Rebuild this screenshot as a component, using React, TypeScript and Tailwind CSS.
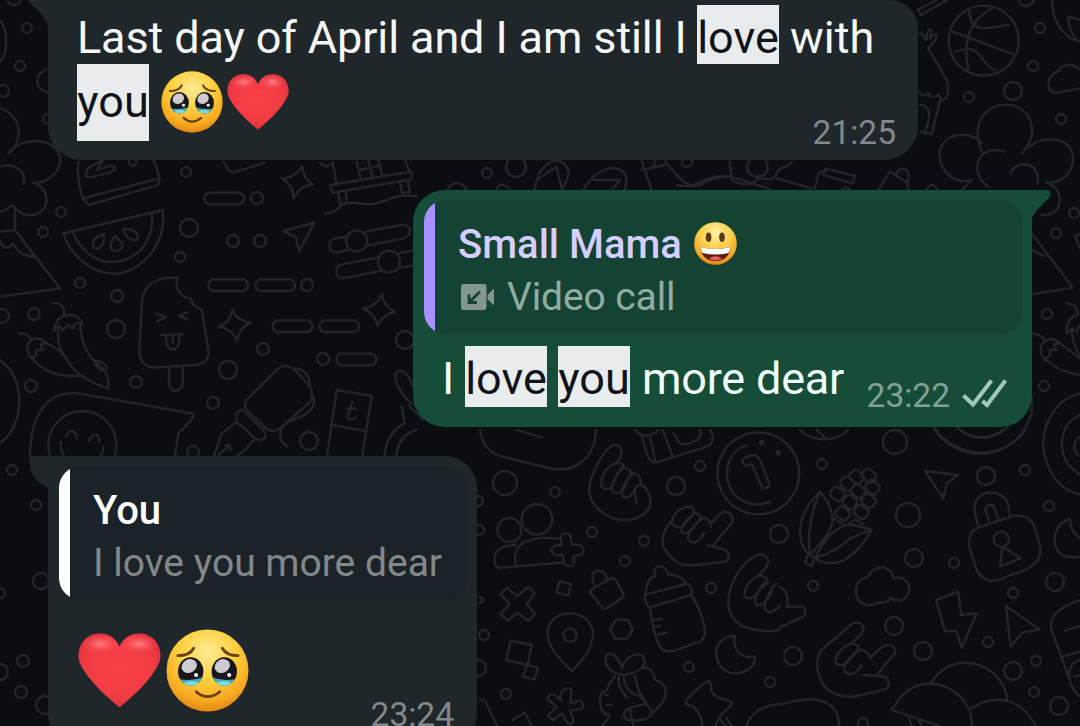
import React from "react";

type Dot = [number, number, number];

const dots: Dot[] = [
  [27, 28, 5], [20, 66, 5], [3, 91, 6], [14, -2, 7], [48, 119, 5],
  [186, 172, 5], [61, 212, 5], [43, 232, 5], [80, 283, 5], [257, 198, 6], [189, 228, 9],
  [233, 241, 6], [260, 241, 6], [180, 257, 5], [307, 285, 6], [117, 296, 6], [34, 314, 6], [2, 316, 7],
  [116, 329, 9], [263, 349, 6], [228, 370, 9], [323, 359, 6], [136, 382, 6], [31, 386, 6],
  [213, 403, 6], [309, 441, 9], [193, 452, 6], [405, 340, 9], [12, 470, 5], [36, 505, 5],
  [41, 581, 8], [0, 593, 5], [23, 661, 6], [0, 672, 8], [21, 692, 6], [45, 705, 9],
  [487, 173, 5], [516, 167, 10], [457, 193, 10], [687, 162, 5],
  [969, 97, 5], [1033, 66, 5], [1040, 28, 5], [1013, 91, 9], [1026, -2, 8], [1061, 119, 5],
  [1074, 213, 5], [1056, 233, 5], [1047, 314, 5], [1044, 386, 5], [932, 190, 5],
  [505, 483, 12], [555, 492, 5], [478, 501, 5], [479, 530, 5], [484, 635, 5], [478, 668, 8], [506, 694, 5],
  [592, 532, 5], [644, 541, 5], [625, 561, 5], [700, 466, 5], [676, 486, 9], [711, 588, 5], [689, 667, 5],
  [770, 682, 5], [822, 464, 5], [779, 534, 9], [895, 442, 12], [986, 476, 9], [1025, 470, 5], [1049, 506, 5],
  [908, 515, 12], [914, 558, 9], [954, 563, 5], [1013, 593, 5], [1055, 582, 9], [894, 626, 9],
  [813, 586, 5], [793, 656, 9], [923, 651, 9], [988, 642, 5], [1036, 661, 5], [1013, 671, 9],
  [1034, 692, 5], [1059, 706, 9], [863, 723, 5],
];

const kernels = [
  [230, 140], [266, 137], [202, 161], [172, 192], [234, 183],
  [278, 172], [210, 216], [266, 212], [188, 250], [244, 246],
];

function Corn() {
  return (
    <g>
      {kernels.map(([x, y], i) => (
        <rect key={i} x={x - 20} y={y - 17} width="40" height="34" rx="11" transform={`rotate(38 ${x} ${y})`} />
      ))}
      <path d="M75 398L84 374L104 384L96 409ZM90 374C80 310 95 250 118 186M118 186C85 220 65 250 60 300C60 340 72 362 90 374C110 350 155 310 158 270C155 235 140 205 118 186M105 384C130 330 170 280 220 285L275 298C255 340 220 375 190 392C160 405 125 400 105 384C150 372 190 345 210 325L275 298M160 265L190 283M205 282L225 268L250 282" />
    </g>
  );
}

function Wallpaper() {
  return (
    <svg
      className="pointer-events-none absolute inset-0"
      width="1080"
      height="726"
      viewBox="0 0 1080 726"
      fill="none"
      stroke="#22262a"
      strokeWidth="2.3"
      strokeLinecap="round"
      strokeLinejoin="round"
    >
      {dots.map(([x, y, r], i) => (
        <circle key={i} cx={x} cy={y} r={r} />
      ))}

      {/* upper left */}
      <g transform="scale(.33333)" strokeWidth="7">
        <path d="M0 60C25 95 25 160 0 185M145 207C105 215 95 265 145 278M0 325C70 345 70 430 25 460C70 400 190 415 180 490C170 530 135 550 98 548C155 560 155 650 85 645C60 645 50 625 35 615C25 625 10 635 0 635M0 500C50 485 80 520 70 552" />
      </g>
      <g transform="translate(0 150) scale(.33333)" strokeWidth="7">
        <path d="M45 175V240L180 415L0 440M0 245L45 240L105 320C75 320 50 305 38 280C25 305 5 290 0 272" />
        <path d="M235 35C230 80 240 120 248 145L478 85C475 60 465 45 460 30M248 145L265 165L475 105L480 85M260 70C250 80 265 85 290 78L335 65C350 60 345 45 330 48L290 60L310 30L270 50Q255 60 260 70" />
        <circle cx="398" cy="36" r="11" />
        <path d="M190 250L488 180C500 260 450 350 360 370C280 378 215 320 190 250ZM218 245C240 300 290 345 350 335C420 325 465 265 455 190" />
        <path d="M312 253C285 260 275 275 280 292C295 305 315 285 312 253ZM345 258C330 275 328 295 340 302C360 305 370 290 367 280ZM371 237C375 262 395 275 412 268C420 250 400 235 371 237Z" />
        <path d="M534 383C470 380 425 400 425 470L418 600C418 640 440 655 475 652L585 645C615 640 628 630 625 600L605 478Q575 470 573 445C540 445 520 410 534 383ZM507 655V700C507 730 548 730 548 700V650M467 489L498 502L472 514M564 486L537 497L563 508M485 555L548 553M498 558C498 585 505 600 520 598C535 597 540 575 538 556M518 560V580" />
        <path d="M160 460C185 455 198 475 190 498C170 505 165 525 160 543L178 528L188 540L205 525L218 535L228 518L248 522C240 500 220 490 192 498M175 540C170 580 180 600 215 650C250 690 290 705 325 715C325 680 320 665 290 640C250 600 245 570 240 525M55 550C75 548 90 558 95 570C75 580 80 610 95 625L110 612L107 600L128 600L122 583L138 580C125 565 110 562 95 570M98 625C125 665 180 680 240 678M138 578C160 590 180 600 190 615M280 633C300 630 330 645 318 660C305 665 292 655 285 642" />
        <path d="M90 925C90 810 130 720 235 730L575 790C590 800 560 825 535 850L525 918" />
        <circle cx="247" cy="885" r="102" />
        <path d="M198 860C205 835 230 840 230 865M267 873C280 845 298 850 298 875M182 875C180 900 190 920 205 930M310 890C310 910 300 920 290 930M0 630C75 680 80 820 0 880" />
        <rect x="613" y="128" width="119" height="35" rx="17" />
        <rect x="625" y="388" width="119" height="35" rx="17" />
        <rect x="766" y="388" width="119" height="35" rx="17" />
        <rect x="818" y="511" width="119" height="35" rx="17" />
        <rect x="958" y="511" width="119" height="35" rx="17" />
        <rect x="1010" y="611" width="119" height="35" rx="17" />
        <path d="M845 85Q880 85 907 50Q910 90 940 103Q900 105 880 145Q880 105 845 85ZM655 530Q690 520 697 480Q715 515 753 519Q718 530 712 572Q695 535 655 530ZM1090 475Q1130 470 1146 432Q1150 470 1186 486Q1150 490 1133 528Q1125 490 1090 475ZM850 243L943 218L897 305L888 262Z" />
        <path d="M670 35C685 55 685 68 700 67L795 38M990 105L1235 65V88L998 128ZM998 40L1010 100M1070 35L1083 88M1105 32L1118 82M1135 30L1147 78M1215 30L1228 65M1078 60L1140 47M1015 130L1020 165L1042 155L1036 125M1200 100L1208 130L1230 125L1224 95M975 192Q1010 185 1025 165C1060 150 1080 165 1110 162C1170 160 1160 130 1250 138M960 38C975 55 990 50 1000 35" />
        <path d="M1040 260L1005 265C980 272 985 310 1010 307L1042 300M1097 245L1205 225C1235 220 1240 260 1210 265L1105 286M1135 322L1025 343C1000 350 1005 385 1030 385L1145 362M1195 310L1240 302M1200 353L1240 347" />
        <circle cx="1070" cy="273" r="32" />
        <circle cx="1167" cy="335" r="33" />
        <path d="M1010 720L1115 738L1086 925M1010 720L980 925M998 825L1095 843M1057 755L1045 795C1042 812 1055 812 1068 802M1038 775L1070 777" />
        <path d="M740 750L835 655C855 640 870 650 890 665L930 710C940 730 940 745 925 760L840 835C820 848 805 842 795 832L740 780Q730 765 740 750ZM880 655C915 655 930 680 928 702M940 742C950 780 920 795 865 815C835 835 830 870 862 888M708 800Q710 780 728 780L790 840C805 860 790 875 770 868L715 820Q707 812 708 800M708 818L665 850L640 925M762 870L735 900L700 925M655 915L690 885M675 885L690 885L690 900" />
        <path d="M1250 770C1200 740 1165 670 1200 662C1225 665 1235 700 1245 720M1205 770L1215 820C1170 840 1155 880 1152 930M1250 840C1210 850 1190 880 1187 930M1225 765L1270 810" />
      </g>

      {/* between the first two bubbles */}
      <g transform="translate(330 155) scale(.33333)" strokeWidth="7">
        <path d="M615 105C620 40 660 10 690 20C735 40 710 80 695 105M620 75L680 35L695 100M760 105C800 30 880 20 890 70L885 105M790 75L870 75L845 105M935 18L965 105M935 45L1005 30M975 15L970 35M1005 18C1050 75 1080 110 1120 85Q1150 65 1200 65M500 105Q505 75 540 100" />
      </g>
      <g transform="translate(680 0) scale(.33333)" strokeWidth="7">
        <path d="M-10 555C60 570 70 520 150 530Q220 550 270 568M150 485C145 510 160 515 155 540C180 555 215 560 235 535L275 538C300 520 285 505 320 500L335 485M290 535L395 565M405 565L415 520L440 510M435 505L525 528L518 550L430 525ZM595 570L630 515L650 525C650 500 685 500 685 525C690 540 675 545 685 570M630 515L685 550M485 570Q500 555 510 570" />
        <circle cx="232" cy="500" r="31" />
        <path d="M712 30L790 -10M722 45L810 -5M715 28L722 45M718 100C735 95 730 125 740 120C740 75 765 80 750 115C775 90 780 110 745 145L800 240C810 270 800 305 785 300M718 275C725 295 740 285 745 280C750 295 765 290 775 285L782 295L755 402L720 395M720 315C750 315 755 345 735 395" />
        <circle cx="911" cy="122" r="105" />
        <path d="M818 95L1005 165M937 25C870 60 845 120 865 210M868 30C870 110 930 80 985 75M825 155C910 125 895 190 945 212" />
        <path d="M1117 0C1115 60 1150 115 1200 125M1165 50C1165 90 1185 120 1200 125M1200 60L1165 50M1200 210C1175 185 1140 195 1135 215C1095 220 1095 285 1135 278L1200 265" />
        <path d="M905 453C850 320 1000 275 1045 350C1070 395 1050 430 1027 460C1070 400 1190 400 1178 490C1170 530 1135 550 1098 548C1155 560 1155 650 1085 645M905 430C870 390 790 395 778 460C778 515 825 555 875 540L845 570M975 455C920 440 890 465 892 510Q900 545 925 560M990 522C1010 475 1085 485 1073 552" />
      </g>

      {/* right edge */}
      <g transform="translate(900 0) scale(.33333)" strokeWidth="7">
        <path d="M395 700L518 863L395 883M398 750Q420 768 445 768M525 710L545 700M525 710L540 745" />
        <path d="M500 910C525 910 535 930 532 945C510 950 500 970 500 1000L515 985L530 995L540 975M398 1000C420 1002 430 1015 438 1022C415 1035 420 1065 435 1080L450 1065V1050L470 1050L462 1032L480 1030C465 1015 450 1015 438 1022M438 1080C465 1105 500 1120 540 1125M480 1030L540 1075M515 985Q515 1030 540 1070" />
        <path d="M540 1180C460 1200 415 1290 435 1370C450 1430 490 1475 540 1483M540 1245C480 1270 470 1350 510 1400L540 1425M540 1310C518 1325 515 1350 540 1370M100 1280C175 1390 350 1390 395 1240V1185M170 1280C215 1325 275 1325 325 1280" />
      </g>

      {/* lower middle */}
      <g transform="translate(480 430) scale(.33333)" strokeWidth="7">
        <path d="M0 0C10 60 40 75 90 85L210 115C280 130 345 90 348 0M110 0L185 22M465 0C480 20 510 25 535 0M485 20C500 60 500 100 530 97L680 50C705 40 700 10 690 0M510 20L525 90M548 0L578 78M580 10L600 40Q610 50 650 30Q665 20 660 0" />
        <path d="M328 170C335 130 360 75 395 47C420 38 430 60 422 80L408 100M328 170C320 230 390 270 430 270C500 270 525 225 505 190C490 150 460 165 465 190L470 220M408 100C375 110 360 145 365 170C380 185 395 175 405 150C415 120 440 105 425 100L408 100M430 113C405 135 390 170 398 185C415 200 435 175 440 155C450 130 465 120 430 113M465 130C435 150 420 180 428 198C445 212 460 190 465 175M455 128C480 130 485 150 480 165" />
        <path d="M575 275C550 295 545 320 550 350C580 400 605 410 650 405L735 395C755 385 745 365 735 360L680 345M700 345L755 280C765 255 745 240 725 248L692 280M575 275C580 250 600 235 620 230C650 230 645 250 620 275C610 295 595 300 575 280M645 248C615 270 600 295 605 308C625 315 640 295 650 280C665 265 665 255 645 248M672 262C640 285 620 310 625 330C645 350 665 325 672 308M672 262C690 270 690 275 692 290" />
        <circle cx="835" cy="130" r="123" />
        <path d="M800 45C730 70 725 160 770 200C800 225 840 230 870 215M788 95C785 85 800 78 825 75Q835 80 840 90L868 160C870 175 850 178 845 170L815 103L800 108Q790 105 788 95" />
        <circle cx="845" cy="38" r="5" />
        <circle cx="895" cy="68" r="5" />
        <circle cx="88" cy="300" r="36" />
        <circle cx="171" cy="268" r="46" />
        <path d="M108 345C55 345 40 370 45 395Q45 415 65 413L245 398M108 408C100 375 110 350 130 338C170 320 200 322 242 326M242 326C242 305 272 305 272 325L275 343L298 345C318 352 312 375 298 375L280 380L283 398C280 412 255 412 253 398L248 375L228 376C210 370 210 350 228 347L245 345ZM62 493L80 473L112 498L145 470L165 490L140 522L165 552L145 573L112 548L82 573L62 552L88 522ZM240 453L273 463L264 497L229 487ZM92 632L156 645L142 705L79 690ZM142 705L173 713L164 748L128 740ZM275 723C230 680 200 645 203 605C210 535 320 530 338 600C342 645 320 680 275 723Z" />
        <circle cx="270" cy="615" r="20" />
        <path d="M332 490Q330 480 340 475L395 445Q402 442 408 450L430 490Q432 500 425 505L380 535Q370 538 365 530ZM345 470C325 430 345 420 360 423C375 425 380 440 380 452M408 568L445 570L458 598L443 625L407 627L390 598ZM98 870L135 848L155 888M0 810L15 812L52 888M0 500L12 510L0 520" />
        <path d="M497 490C500 450 515 440 525 438C510 405 560 395 562 432C595 435 610 445 615 458M495 495L625 460Q640 480 633 495L510 532Q493 520 495 495M510 532C515 580 525 620 540 650Q550 668 580 663L660 635Q680 620 673 590C665 550 655 525 635 498M520 570L545 567M525 592L540 588M535 615L560 608" />
        <path d="M765 618C690 620 695 710 750 728C795 738 830 705 824 678C790 690 755 660 765 618ZM685 753C660 765 640 790 618 810Q615 828 640 828C665 860 665 870 668 888M685 753C700 765 690 775 695 785C715 810 730 805 755 815C760 830 735 840 722 855L705 888M722 870L735 888M740 865L755 888" />
        <path d="M750 480C765 430 800 385 840 372C865 375 870 390 860 410L835 438M750 480C735 535 755 570 790 590Q850 610 900 600M835 438C805 450 790 480 795 500C815 515 835 490 840 475C855 455 880 440 835 438M865 458C830 480 820 510 830 525C850 530 870 500 875 485M890 460C870 475 850 525 855 540C870 555 890 540 900 525M800 888C810 850 850 825 900 822" />
        <path d="M427 715C405 660 380 665 377 685C375 710 395 730 420 732C435 740 480 725 492 705C500 675 475 665 450 680Q430 695 427 715M405 738C390 760 380 770 382 780C360 780 355 810 365 840C380 860 395 850 385 865L365 888M375 795H385M380 825H395M418 738C410 765 425 780 440 803M432 740C430 765 450 795 480 798L517 845M465 738Q475 795 500 820L455 832C425 840 425 870 450 870Q505 875 515 850C580 800 560 760 525 750C520 715 500 710 490 715M450 840L460 888M240 800C245 775 275 765 275 785L270 820L300 812C315 820 310 835 300 838L270 842L280 870C280 885 265 885 260 875L245 850L220 870C205 865 205 855 210 850L230 830L205 810C200 795 215 790 225 795L243 812Z" />
      </g>

      {/* lower right */}
      <g transform="translate(780 430) scale(.33333)" strokeWidth="7">
        <Corn />
        <path d="M60 0C95 35 165 40 205 0M110 0L135 22M465 0C525 95 675 95 735 0M540 0C570 30 630 30 670 0" />
        <path d="M435 123L535 135L500 160L490 205ZM678 528L778 598L725 608L692 650ZM468 510L535 485L543 555L590 550L545 653L530 603L495 603Z" />
        <path d="M595 292L583 240C580 170 680 175 685 230L690 258M627 272L616 240C620 220 640 220 643 235L655 265M595 292L700 258C730 253 755 265 763 290L780 350C787 380 770 400 745 415L655 450C625 460 600 440 590 420L568 350C565 315 575 300 595 292ZM668 350L722 385L660 410Z" />
        <circle cx="664" cy="328" r="23" />
        <path d="M265 440C275 405 335 400 340 445C375 435 395 465 385 490C375 515 345 515 330 503C325 520 305 520 298 517C275 530 240 530 230 500C220 465 240 445 265 440M870 267C820 280 810 345 845 375Q870 385 900 380M870 267Q870 305 900 325" />
        <path d="M120 665L215 582C240 570 260 590 245 610L215 640M120 665C100 705 120 760 145 780C180 805 220 802 245 795L315 778C335 765 325 745 315 740L250 735M290 735L345 670C350 645 320 640 305 652L272 682M215 640C185 650 160 680 168 700C190 715 205 695 220 675C235 655 250 650 215 640M240 660C210 680 185 705 195 725C215 745 235 720 245 705M245 660Q265 665 272 685M0 470C30 490 25 520 20 530L70 530C80 540 75 555 70 560L0 592" />
        <path d="M335 840C370 780 410 760 450 760C530 765 580 830 575 888M335 840L480 888M455 755C500 690 580 680 640 730Q680 770 682 810M570 838C640 790 720 800 768 888M388 865L395 888M415 872L425 885M0 825C90 795 175 800 178 888M900 510C840 530 805 560 815 600L865 740Q880 790 900 800M855 602L900 588M850 680L900 665M900 690C865 700 865 730 870 745M885 740L900 735" />
      </g>
    </svg>
  );
}

function HoldingTears({ id, className }: { id: string; className: string }) {
  return (
    <svg viewBox="0 0 84 84" className={className}>
      <defs>
        <radialGradient id={`${id}f`} cx=".5" cy=".28" r=".75">
          <stop offset="0" stopColor="#ffec96" />
          <stop offset=".45" stopColor="#fdd03f" />
          <stop offset=".8" stopColor="#f6a81f" />
          <stop offset="1" stopColor="#e07c10" />
        </radialGradient>
        <clipPath id={`${id}l`}><ellipse cx="25" cy="43" rx="12.8" ry="14.500" /></clipPath>
        <clipPath id={`${id}r`}><ellipse cx="59" cy="43" rx="12.8" ry="14.500" /></clipPath>
      </defs>
      <circle cx="42" cy="42" r="41.500" fill={`url(#${id}f)`} />
      <g clipPath={`url(#${id}l)`}>
        <rect x="12" y="26" width="28" height="34" fill="#17181b" />
        <path d="M11 50Q26 54 39 48V60H11Z" fill="#42adba" />
        <ellipse cx="26" cy="55.500" rx="8" ry="2.500" fill="#82dde2" />
      </g>
      <g clipPath={`url(#${id}r)`}>
        <rect x="45" y="26" width="28" height="34" fill="#17181b" />
        <path d="M45 48Q58 54 73 50V60H45Z" fill="#42adba" />
        <ellipse cx="58" cy="55.500" rx="8" ry="2.500" fill="#82dde2" />
      </g>
      <ellipse cx="23.500" cy="37.500" rx="8" ry="6.800" fill="#cdcbd0" transform="rotate(-30 23.500 37.500)" />
      <ellipse cx="57" cy="37.500" rx="8" ry="6.800" fill="#cdcbd0" transform="rotate(-30 57 37.500)" />
      <circle cx="30.500" cy="46.500" r="2" fill="#fff" />
      <circle cx="64" cy="46.500" r="2" fill="#fff" />
      <path d="M12 27Q24 27 28 19.500M57 19.500Q61 27 73 27M30.500 63.500Q42 73.500 54.500 63.500" fill="none" stroke="#69400f" strokeWidth="2.800" strokeLinecap="round" />
    </svg>
  );
}

function Heart({ id, className }: { id: string; className: string }) {
  return (
    <svg viewBox="0 0 84 76" className={className}>
      <defs>
        <radialGradient id={id} cx=".5" cy=".45" r=".62">
          <stop offset="0" stopColor="#f94146" />
          <stop offset=".65" stopColor="#f23c44" />
          <stop offset="1" stopColor="#d92c3b" />
        </radialGradient>
        <radialGradient id={`${id}s`}>
          <stop offset="0" stopColor="#ff8a90" stopOpacity=".85" />
          <stop offset="1" stopColor="#ff5a60" stopOpacity="0" />
        </radialGradient>
      </defs>
      <path d="M42 75.500C37 71 22 59 11 45C2 33 0 28 .5 21C1.500 8 11 .5 22 .5C32 .5 39 6 42 14C45 6 52 .5 62 .5C73 .5 82.500 8 83.500 21C84 28 82 33 73 45C62 59 47 71 42 75.500Z" fill={`url(#${id})`} />
      <ellipse cx="22" cy="11" rx="18" ry="9" fill={`url(#${id}s)`} />
      <ellipse cx="62" cy="11" rx="18" ry="9" fill={`url(#${id}s)`} />
    </svg>
  );
}

function Grin({ className }: { className: string }) {
  return (
    <svg viewBox="0 0 43 43" className={className}>
      <defs>
        <radialGradient id="grin" cx=".5" cy=".25" r=".78">
          <stop offset="0" stopColor="#fff2a8" />
          <stop offset=".45" stopColor="#fdd04c" />
          <stop offset=".85" stopColor="#f09f22" />
          <stop offset="1" stopColor="#dc7912" />
        </radialGradient>
      </defs>
      <circle cx="21.500" cy="21.500" r="21.300" fill="url(#grin)" />
      <ellipse cx="14.600" cy="15.300" rx="2.800" ry="4.800" fill="#5b3a12" />
      <ellipse cx="28" cy="15.300" rx="2.800" ry="4.800" fill="#5b3a12" />
      <path d="M6.500 25Q21.500 29 36.500 25C36 34 30 39 21.500 39S7 34 6.500 25Z" fill="#5c1d10" />
      <path d="M6.500 25Q21.500 29 36.500 25Q36 29 34.500 31Q21.500 34 8.500 31Q7 29 6.500 25Z" fill="#fff" />
      <path d="M15 36.500Q21.500 32 28 36.500Q21.500 40.500 15 36.500Z" fill="#e95d62" />
    </svg>
  );
}

function VideoIcon() {
  return (
    <svg viewBox="0 0 33 26" className="mb-[2px] h-[26px] w-[33px] shrink-0">
      <path d="M3 0H22.500Q25.500 0 25.500 3V23Q25.500 26 22.500 26H3Q0 26 0 23V3Q0 0 3 0ZM33 4.500V21.500L26.500 15V11Z" fill="#839690" />
      <path d="M19 7.500L8.500 18M8 10.500V18.500H16" fill="none" stroke="#144233" strokeWidth="2.800" />
    </svg>
  );
}

function Ticks() {
  return (
    <svg viewBox="0 0 45 29" className="mb-[5px] h-[29px] w-[45px]" fill="none" stroke="#a1c9b6" strokeWidth="4">
      <path d="M1.500 16.500L11 25.500L29.500 1.500M20.500 22L25 26L43.500 1.500" />
    </svg>
  );
}

const mark = "shrink-0 bg-[#e9eced] text-[#101418] text-center";

export default function App() {
  return (
    <main className="relative flex h-[726px] w-[1080px] flex-col overflow-hidden bg-[#0a0e13] font-['Roboto',sans-serif] whitespace-pre">
      <Wallpaper />

      <section className="relative ml-[48px] h-[160px] w-[870px] shrink-0 rounded-b-[34px] rounded-tr-[28px] bg-[#20272a] pt-[5px] pl-[29px] text-[45px] text-[#f5f7f8]">
        <svg viewBox="0 0 20 26" className="absolute top-0 -left-[20px] h-[26px] w-[20px]"><path d="M0 0H20V26Q15 14 6 7Q1 3 0 0Z" fill="#212629" /></svg>
        <div className="flex h-[59px] leading-[65px]">
          <span className="w-[620px] shrink-0 tracking-[-0.12px]">Last day of April and I am still I</span>
          <span className={`${mark} h-[59px] w-[82px]`}>love</span>
          <span className="ml-[11px]">with</span>
        </div>
        <div className="flex h-[77px] leading-[75px]">
          <span className={`${mark} h-[77px] w-[72px]`}>you</span>
          <HoldingTears id="t1" className="mt-[7px] ml-[12px] h-[62px] w-[62px]" />
          <Heart id="h1" className="mt-[10px] ml-[4px] h-[56px] w-[62px]" />
        </div>
        <time className="absolute right-[22px] bottom-[7px] text-[33.5px] leading-[40px] text-[#83888b]">21:25</time>
      </section>

      <section className="relative mt-[30px] ml-[413px] h-[237px] w-[619px] shrink-0 rounded-[32px] rounded-tr-none bg-[#154d38] px-[11px] pt-[10px]">
        <svg viewBox="0 0 20 30" className="absolute top-0 -right-[19px] h-[30px] w-[20px]"><path d="M0 0H16Q21 1 19 6Q17 9 11 15Q4 21 1 28V30H0Z" fill="#154d38" /></svg>
        <div className="flex h-[134px] w-[598px] overflow-hidden rounded-[22px] bg-[#144334]">
          <div className="w-[11px] shrink-0 bg-[#a791ff]" />
          <div className="pt-[18px] pl-[23px] text-[39px] leading-[53px]">
            <div className="flex items-center text-[40px] font-medium text-[#d5ceff]">
              <span>Small Mama</span>
              <Grin className="mb-[2px] ml-[12px] h-[43px] w-[43px]" />
            </div>
            <div className="flex items-center pl-[3px] text-[#91aca2]">
              <VideoIcon />
              <span className="ml-[13px] tracking-[-0.1px]">Video call</span>
            </div>
          </div>
        </div>
        <div className="mt-[12px] flex h-[61px] text-[45px] leading-[65px] text-[#effff7]">
          <span className="w-[41px] shrink-0 pl-[18px]">I</span>
          <span className={`${mark} h-[61px] w-[82px]`}>love</span>
          <span className={`${mark} ml-[11px] h-[61px] w-[72px]`}>you</span>
          <span className="ml-[12px] tracking-[-0.2px]">more dear</span>
        </div>
        <div className="absolute right-[25px] bottom-[11px] flex items-center text-[33.5px] leading-[40px] text-[#84a195]">
          <time className="mr-[12px]">23:22</time>
          <Ticks />
        </div>
      </section>

      <section className="relative mt-[29px] ml-[48px] h-[290px] w-[429px] shrink-0 rounded-[32px] rounded-tl-none bg-[#20272a] px-[11px] pt-[10px]">
        <svg viewBox="0 0 20 32" className="absolute top-0 -left-[19px] h-[32px] w-[20px]"><path d="M0 0H20V32Q4 26 1 11Z" fill="#202529" /></svg>
        <div className="flex h-[134px] w-[409px] overflow-hidden rounded-[22px] bg-[#1c2328]">
          <div className="w-[11px] shrink-0 bg-white" />
          <div className="pt-[18px] pl-[23px] text-[39px] leading-[53px]">
            <div className="text-[40px] font-medium text-white">You</div>
            <div className="text-[#83888b]">I love you more dear</div>
          </div>
        </div>
        <div className="mt-[29px] ml-[19px] flex">
          <Heart id="h2" className="mt-[4px] h-[75px] w-[83px]" />
          <HoldingTears id="t2" className="ml-[5px] h-[83px] w-[83px]" />
        </div>
        <time className="absolute top-[239px] right-[23px] text-[33.5px] leading-[40px] text-[#83888b]">23:24</time>
      </section>
    </main>
  );
}
